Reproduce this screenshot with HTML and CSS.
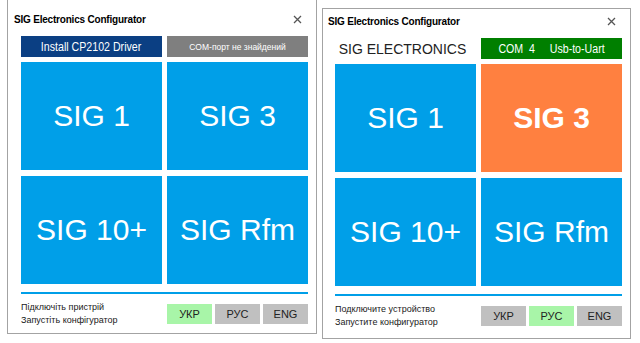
FILE: index.html
```html
<!DOCTYPE html>
<html lang="uk">
<head>
    <meta charset="UTF-8">
    <title>SIG Electronics Configurator</title>
    <link rel="stylesheet" href="styles.css">
</head>
<body>

<div class="desk">
    <div class="window win-ua">
        <div class="titlebar">
            <span class="title">SIG Electronics Configurator</span>
            <svg class="close" width="9" height="9" viewBox="0 0 9 9"><path d="M1 1L8 8M8 1L1 8"/></svg>
        </div>
        <div class="toprow">
            <button class="driver-button"><span class="narrow">Install CP2102 Driver</span></button>
            <div class="port port-none">COM-порт не знайдений</div>
        </div>
        <div class="tiles">
            <button class="tile">SIG 1</button>
            <button class="tile">SIG 3</button>
            <button class="tile">SIG 10+</button>
            <button class="tile">SIG Rfm</button>
        </div>
        <div class="rule"></div>
        <div class="footer">
            <div class="hint">
                <div>Підключіть пристрій</div>
                <div>Запустіть конфігуратор</div>
            </div>
            <div class="langs">
                <button class="lang active">УКР</button>
                <button class="lang">РУС</button>
                <button class="lang">ENG</button>
            </div>
        </div>
    </div>

    <div class="window win-ru">
        <div class="titlebar">
            <span class="title">SIG Electronics Configurator</span>
            <svg class="close" width="9" height="9" viewBox="0 0 9 9"><path d="M1 1L8 8M8 1L1 8"/></svg>
        </div>
        <div class="toprow">
            <div class="brand">SIG ELECTRONICS</div>
            <div class="port port-ok"><span class="narrow">COM&nbsp; 4 &nbsp; &nbsp; Usb-to-Uart</span></div>
        </div>
        <div class="tiles">
            <button class="tile">SIG 1</button>
            <button class="tile selected">SIG 3</button>
            <button class="tile">SIG 10+</button>
            <button class="tile">SIG Rfm</button>
        </div>
        <div class="rule"></div>
        <div class="footer">
            <div class="hint">
                <div>Подключите устройство</div>
                <div>Запустите конфигуратор</div>
            </div>
            <div class="langs">
                <button class="lang">УКР</button>
                <button class="lang active">РУС</button>
                <button class="lang">ENG</button>
            </div>
        </div>
    </div>
</div>

</body>
</html>
```

FILE: styles.css
```css
body {
    margin: 0;
    background-color: #ffffff;
    font-family: "Liberation Sans", Arial, sans-serif;
}

.desk {
    display: flex;
    align-items: flex-start;
}

.window {
    box-sizing: border-box;
    display: flex;
    flex-direction: column;
    background-color: #ffffff;
    border: 1px solid #a3a3a3;
    padding: 0 8px 0 13px;
}

/* left window is cut at the top of the shot */
.win-ua {
    margin-left: 7px;
    width: 310px;
    height: 334px;
    border-top: none;
    padding-top: 7px;
}

.win-ru {
    margin-left: 5px;
    margin-top: 8px;
    width: 309px;
    height: 331px;
    padding-left: 12px;
}

.titlebar {
    height: 24px;
    display: flex;
    align-items: center;
    justify-content: space-between;
    margin-left: -7px;
    padding-right: 6px;
}

.title {
    font-weight: bold;
    font-size: 10px;
    letter-spacing: -0.2px;
    color: #000000;
}

.close path {
    stroke: #555555;
    stroke-width: 1.3;
    fill: none;
}

.toprow {
    display: grid;
    grid-template-columns: 141px 141px;
    column-gap: 5px;
    height: 21px;
    margin-top: 5px;
}

button {
    border: none;
    margin: 0;
    padding: 0;
    font-family: "Liberation Sans", Arial, sans-serif;
    cursor: pointer;
}

/* the app font is condensed */
.narrow {
    display: inline-block;
    white-space: nowrap;
    transform: scaleX(0.85);
}

.driver-button {
    background-color: #0b3f83;
    color: #ffffff;
    font-size: 12.5px;
}

.port {
    display: flex;
    align-items: center;
    justify-content: center;
    color: #ffffff;
}

.port-none {
    background-color: #7f7f7f;
    font-size: 8.5px;
}

.port-ok {
    background-color: #007f00;
    font-size: 12.5px;
}

.brand {
    display: flex;
    align-items: center;
    justify-content: center;
    padding-right: 6px;
    font-size: 14px;
    color: #222222;
}

.tiles {
    display: grid;
    grid-template-columns: 141px 141px;
    grid-template-rows: 108px 108px;
    gap: 6px 5px;
    margin-top: 5px;
}

.tile {
    background-color: #009fe8;
    color: #ffffff;
    font-size: 30px;
}

.tile.selected {
    background-color: #ff8040;
    font-weight: bold;
}

.rule {
    height: 2px;
    background-color: #009fe8;
    margin-top: 8px;
    width: 287px;
}

.footer {
    display: flex;
    justify-content: space-between;
    align-items: center;
    margin-top: 7px;
    width: 287px;
}

.hint {
    font-size: 9px;
    line-height: 13px;
    color: #1a1a1a;
}

.langs {
    display: flex;
    gap: 3px;
}

.lang {
    width: 45px;
    height: 20px;
    background-color: #c0c0c0;
    color: #222222;
    font-size: 11px;
}

.lang.active {
    background-color: #a8f5a8;
}
```
